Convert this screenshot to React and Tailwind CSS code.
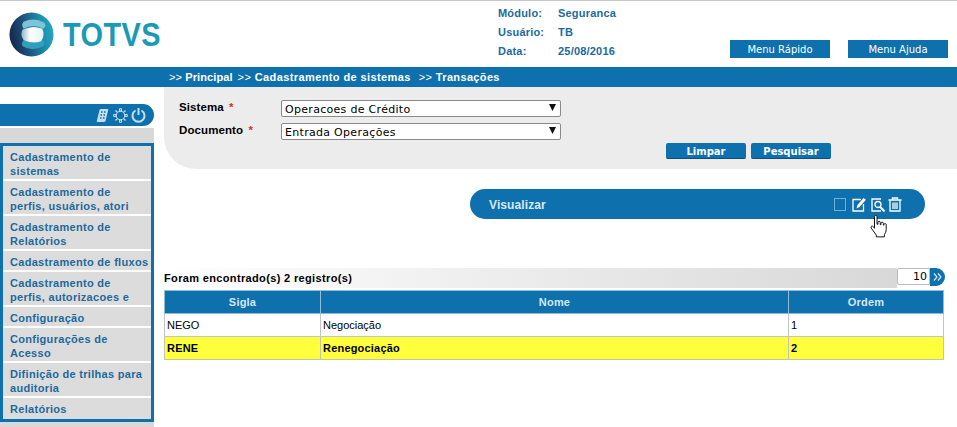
import React from "react";

const menuItems = [
  ["Cadastramento de", "sistemas"],
  ["Cadastramento de", "perfis, usuários, atori"],
  ["Cadastramento de", "Relatórios"],
  ["Cadastramento de fluxos"],
  ["Cadastramento de", "perfis, autorizacoes e"],
  ["Configuração"],
  ["Configurações de", "Acesso"],
  ["Difinição de trilhas para", "auditoria"],
  ["Relatórios"],
];

const Logo = () => (
  <svg width="45" height="45" viewBox="0 0 46 46">
    <defs>
      <linearGradient id="ball" x1="0" y1="0.6" x2="1" y2="0.4">
        <stop offset="0" stopColor="#16264a" />
        <stop offset="0.35" stopColor="#1d4f78" />
        <stop offset="0.75" stopColor="#1c8fae" />
        <stop offset="1" stopColor="#26a5c0" />
      </linearGradient>
      <linearGradient id="core" x1="0" y1="0" x2="1" y2="0">
        <stop offset="0" stopColor="#8fb8cc" />
        <stop offset="0.4" stopColor="#ffffff" />
        <stop offset="1" stopColor="#e4f2f6" />
      </linearGradient>
    </defs>
    <circle cx="23" cy="23" r="22.5" fill="url(#ball)" />
    <path d="M15 10 Q26 5 36 11 Q39 14 35 17 Q25 12 15 17 Q12 13 15 10 Z" fill="#7cc5d8" />
    <path d="M14 35 Q24 41 35 35 Q38 31 34 29 Q24 33 15 29 Q12 32 14 35 Z" fill="#2f9fbd" />
    <path d="M14 18 Q24 13 34 17 Q37 23 33 30 Q24 33 15 29 Q11 23 14 18 Z" fill="url(#core)" />
  </svg>
);

const HandCursor = () => (
  <svg width="18" height="23" viewBox="0 0 20 25">
    <path
      d="M5 1.5 a1.4 1.4 0 0 1 2.8 0 V10 h1 V8 a1.3 1.3 0 0 1 2.6 0 v2.5 h.8 V9 a1.3 1.3 0 0 1 2.6 0 v2 h.7 v-.8 a1.3 1.3 0 0 1 2.5 0 V16 q0 3 -2 5.5 V24 H7 v-2 L1.5 14.5 q-1 -2 .5 -2.5 q1 -.3 2 1 L5 14.5 Z"
      fill="#fff"
      stroke="#111"
      strokeWidth="1.1"
      strokeLinejoin="round"
    />
  </svg>
);

const Field = ({ label, value }) => (
  <div className="flex items-center h-[17px]">
    <label className="w-[102px] -mt-[1px] text-[11.5px] font-bold tracking-[0.1px] text-black">
      {label} <span className="text-[#c0392b] ml-[2px]">*</span>
    </label>
    <div className="relative w-[280px]">
      <select
        defaultValue={value}
        className="block w-full h-[17px] appearance-none rounded-[2px] border border-[#8a8a8a] bg-white pl-[3px] pt-[1px] font-['DejaVu_Sans',sans-serif] text-[11px] leading-[15px] tracking-[0.3px] text-black"
      >
        <option>{value}</option>
      </select>
      <svg className="absolute right-[5px] top-[4px]" width="7" height="7" viewBox="0 0 7 7">
        <path d="M0 0 H7 L3.5 7 Z" fill="#111" />
      </svg>
    </div>
  </div>
);

export default function App() {
  return (
    <div className="w-[957px] h-[427px] overflow-hidden bg-white border-t border-[#c8c8c8] font-['Liberation_Sans',Arial,sans-serif]">
      {/* cabecalho */}
      <header className="flex h-[66px]">
        <div className="flex w-[498px] items-start pl-[9px] pt-[11px]">
          <Logo />
          <span className="ml-[9px] mt-[3px] origin-left scale-x-[0.85] text-[34px] leading-[38px] font-bold tracking-[0.5px] text-[#1b9ab5]">
            TOTVS
          </span>
        </div>
        <div className="flex w-[232px] flex-col gap-[5px] pt-[5px] text-[11px] leading-[14px] font-bold tracking-[0.2px] text-[#1d6a9c]">
          {[
            ["Módulo:", "Seguranca"],
            ["Usuário:", "TB"],
            ["Data:", "25/08/2016"],
          ].map(([label, value]) => (
            <div key={label} className="flex">
              <span className="w-[60px]">{label}</span>
              <span>{value}</span>
            </div>
          ))}
        </div>
        <div className="flex gap-[18px] pt-[39px]">
          {["Menu Rápido", "Menu Ajuda"].map((label) => (
            <button
              key={label}
              className="h-[18px] w-[100px] bg-[#0f70ae] pt-[2px] font-['DejaVu_Sans',sans-serif] text-[10px] leading-[16px] text-white"
            >
              {label}
            </button>
          ))}
        </div>
      </header>

      {/* trilha */}
      <nav className="flex h-[20px] items-center gap-[5px] bg-[#0f70ae] pl-[169px] text-[11px] font-bold text-white">
        <span className="tracking-[0.1px]"><span className="font-normal">&gt;&gt;</span> Principal</span>
        <span className="tracking-[0.4px]"><span className="font-normal">&gt;&gt;</span> Cadastramento de sistemas</span>
        <span className="ml-[3px] tracking-[0.35px]"><span className="font-normal">&gt;&gt;</span> Transações</span>
      </nav>

      <div className="flex">
        {/* menu lateral */}
        <aside className="w-[154px] shrink-0 pt-[17px]">
          <div className="flex h-[22px] items-center justify-end gap-[3px] rounded-r-[11px] bg-[#0f70ae] pr-[8px]">
            <svg width="13" height="15" viewBox="0 0 13 15">
              <path d="M5 1 H11.5 Q12.5 1 12.2 2 L9.5 13 Q9.2 14 8 14 H1.5 Q.5 14 .8 13 L3.5 2 Q3.8 1 5 1 Z" fill="#c5deee" />
              <path d="M5 4 h1.5 M8 4 h1.5 M4.5 7 h1.5 M7.5 7 h1.5 M4 10 h1.5 M7 10 h1.5" stroke="#0f70ae" strokeWidth="1.4" />
            </svg>
            <svg className="ml-[1px]" width="15" height="15" viewBox="0 0 15 15" fill="none" stroke="#c5deee" strokeWidth="1">
              <circle cx="7.5" cy="7.5" r="4.2" />
              <path d="M6.5 0.7 H8.5 V3 H6.5 Z M6.5 12 H8.5 V14.3 H6.5 Z M0.7 6.5 H3 V8.5 H0.7 Z M12 6.5 H14.3 V8.5 H12 Z" />
              <path d="M2.5 2.5 L4.3 4.3 M10.7 10.7 L12.5 12.5 M12.5 2.5 L10.7 4.3 M4.3 10.7 L2.5 12.5" strokeWidth="1.4" />
            </svg>
            <svg width="15" height="16" viewBox="0 0 15 16" fill="none" stroke="#c5deee" strokeWidth="2">
              <path d="M4.5 3.5 A6 6 0 1 0 10.5 3.5" />
              <path d="M7.5 1 V8" />
            </svg>
          </div>
          <div className="mt-[2px] bg-[#d8d8d8] pt-[15px] pb-[6px]">
            <ul className="flex flex-col gap-[2px] border-[3px] border-[#0f70ae] bg-white">
              {menuItems.map((lines) => (
                <li
                  key={lines.join()}
                  className={
                    lines.length > 1
                      ? "h-[33px] bg-[#dcdcdc] pl-[7px] pt-[4px] text-[11px] leading-[14px] font-bold tracking-[0.3px] whitespace-nowrap text-[#1d6a9c]"
                      : "h-[19px] last:h-[21px] bg-[#dcdcdc] pl-[7px] pt-[4px] text-[11px] leading-[14px] font-bold tracking-[0.3px] whitespace-nowrap text-[#1d6a9c]"
                  }
                >
                  {lines.map((line) => (
                    <div key={line}>{line}</div>
                  ))}
                </li>
              ))}
            </ul>
          </div>
        </aside>

        {/* conteudo */}
        <main className="ml-[10px] flex-1">
          <section className="h-[82px] rounded-bl-[32px] bg-[#ececec] pl-[15px] pt-[13px]">
            <div className="flex flex-col gap-[6px]">
              <Field label="Sistema" value="Operacoes de Crédito" />
              <Field label="Documento" value="Entrada Operações" />
            </div>
            <div className="mt-[3px] ml-[487px] flex gap-[5px]">
              {["Limpar", "Pesquisar"].map((label) => (
                <button
                  key={label}
                  className="h-[16px] w-[80px] rounded-[2px] bg-[#0f70ae] border-b border-[#0b4f7c] pt-[2px] font-['DejaVu_Sans',sans-serif] text-[10px] leading-[13px] font-bold text-white"
                >
                  {label}
                </button>
              ))}
            </div>
          </section>

          <div className="relative mt-[20px] ml-[306px] flex h-[30px] w-[455px] items-center rounded-full bg-[#0f70ae] pl-[19px] pt-[1px] text-[12px] font-bold tracking-[0.1px] text-[#d5e8f3]">
            Visualizar
            <div className="ml-auto mr-[23px] flex items-center">
              <span className="h-[13px] w-[12px] border border-[#6fb0d8]" />
              <svg className="ml-[6px] -mt-[1px]" width="15" height="15" viewBox="0 0 15 15" fill="none" stroke="#fff" strokeWidth="1.3">
                <path d="M9 2.5 H1 V14 H11.5 V7" />
                <path d="M4.5 11.5 L5.5 8 L11.5 1 L14 2.8 L7.5 10 Z" fill="#fff" stroke="none" />
              </svg>
              <svg className="ml-[4px]" width="14" height="14" viewBox="0 0 14 14" fill="none" stroke="#fff" strokeWidth="1.3">
                <path d="M10 1 H1 V13 H10" />
                <circle cx="7" cy="6.5" r="3" />
                <path d="M9.3 9 L13.5 13.5" strokeWidth="2" />
              </svg>
              <svg className="ml-[3px] -mt-[1px]" width="14" height="15" viewBox="0 0 14 15" fill="none" stroke="#fff" strokeWidth="1.3">
                <path d="M.5 3 H13.5 M4.5 3 V1 H9.5 V3 M2 3 V14 H12 V3" />
                <path d="M5 5.5 V12 M7 5.5 V12 M9 5.5 V12" />
              </svg>
            </div>
            <div className="absolute left-[400px] top-[26px]">
              <HandCursor />
            </div>
          </div>

          <section className="mt-[49px] w-[781px]">
            <div className="flex h-[20px] items-start">
              <div className="flex h-[20px] flex-1 items-center bg-gradient-to-r from-white to-[#d8d8d8] text-[11px] font-bold tracking-[0.35px] text-black">
                Foram encontrado(s) 2 registro(s)
              </div>
              <div className="h-[17px] w-[33px] rounded-l-[2px] border border-[#bbbbbb] bg-white pr-[2px] text-right font-['DejaVu_Sans',sans-serif] text-[11px] leading-[15px] text-black">
                10
              </div>
              <div className="flex h-[18px] w-[15px] items-center justify-center rounded-r-full bg-[#0f70ae]">
                <svg width="9" height="8" viewBox="0 0 9 8" fill="none" stroke="#d5e8f3" strokeWidth="1.2">
                  <path d="M1 .5 L4 4 L1 7.5 M5 .5 L8 4 L5 7.5" />
                </svg>
              </div>
            </div>
            <table className="mt-[2px] w-[780px] table-fixed border-collapse text-[11px]">
              <thead>
                <tr className="h-[23px] bg-[#0f70ae] font-bold tracking-[0.2px] text-[#d5e8f3]">
                  <th className="w-[156px] border border-[#8fbdda]">Sigla</th>
                  <th className="border border-[#8fbdda]">Nome</th>
                  <th className="w-[155px] border border-[#8fbdda]">Ordem</th>
                </tr>
              </thead>
              <tbody>
                <tr className="h-[23px] bg-white text-black">
                  <td className="border border-[#c4c4c4] pl-[2px]">NEGO</td>
                  <td className="border border-[#c4c4c4] pl-[2px]">Negociação</td>
                  <td className="border border-[#c4c4c4] pl-[2px]">1</td>
                </tr>
                <tr className="h-[23px] bg-[#ffff3c] font-bold tracking-[0.2px] text-black">
                  <td className="border border-[#c4c4a8] pl-[2px]">RENE</td>
                  <td className="border border-[#c4c4a8] pl-[2px]">Renegociação</td>
                  <td className="border border-[#c4c4a8] pl-[2px]">2</td>
                </tr>
              </tbody>
            </table>
          </section>
        </main>
      </div>
    </div>
  );
}
